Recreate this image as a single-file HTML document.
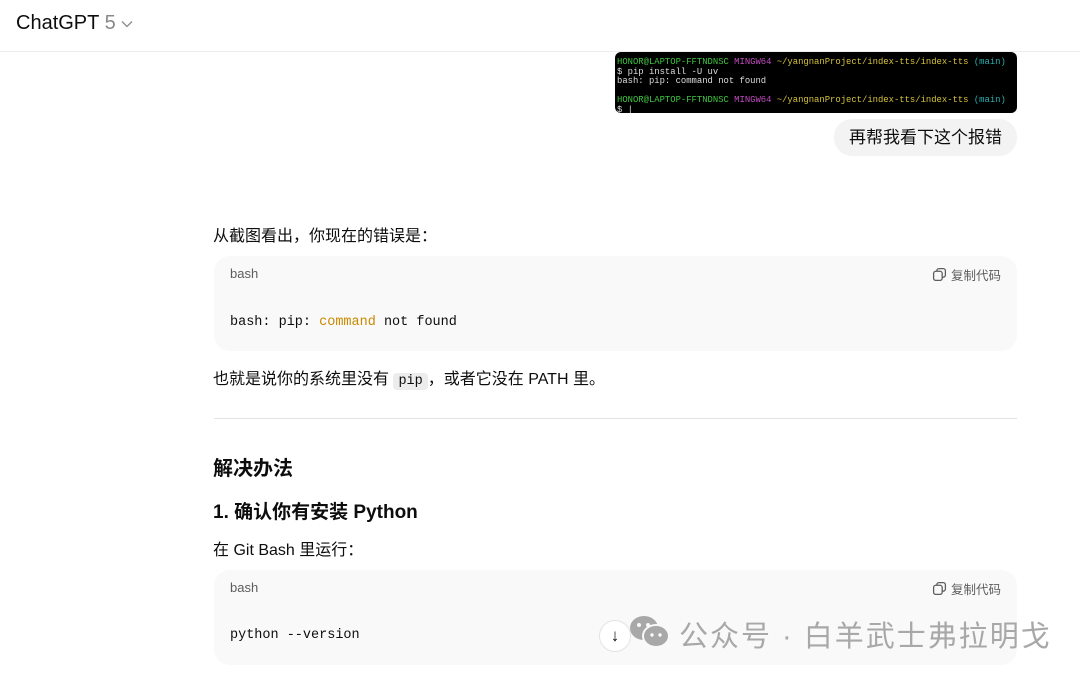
<!DOCTYPE html>
<html><head><meta charset="utf-8"><style>
*{margin:0;padding:0;box-sizing:border-box}
body{width:1080px;height:676px;overflow:hidden;background:#fff;font-family:"Liberation Sans","Noto Sans CJK SC",sans-serif;color:#0d0d0d;position:relative}
.abs{position:absolute}
.mono{font-family:"Liberation Mono","DejaVu Sans Mono",monospace}
.code{position:absolute;left:214px;width:803px;background:#f9f9f9;border-radius:16px}
.lang{position:absolute;left:16px;top:10px;font-size:13px;color:#5d5d5d}
.copy{position:absolute;right:16px;top:9px;font-size:12.5px;color:#5d5d5d;display:flex;align-items:center;gap:4px}
</style></head><body>
<div class="abs" style="left:16px;top:12px;font-size:20px">ChatGPT <span style="color:#888">5</span> <svg width="12" height="8" viewBox="0 0 12 8" style="vertical-align:middle"><path d="M1 1.5l5 5 5-5" fill="none" stroke="#888" stroke-width="1.3"/></svg></div>
<div class="abs" style="left:0;top:51px;width:1080px;height:1px;background:#ececec"></div>
<div class="abs mono" style="left:615px;top:52px;width:402px;height:61px;background:#000;border-radius:6px;font-size:8.9px;line-height:9.5px;padding:6px 2px;color:#ddd;white-space:pre;overflow:hidden"><span style="color:#3fc43f">HONOR@LAPTOP-FFTNDNSC</span> <span style="color:#c04cc0">MINGW64</span> <span style="color:#d5c23a">~/yangnanProject/index-tts/index-tts</span> <span style="color:#2bb0b0">(main)</span>
$ pip install -U uv
bash: pip: command not found

<span style="color:#3fc43f">HONOR@LAPTOP-FFTNDNSC</span> <span style="color:#c04cc0">MINGW64</span> <span style="color:#d5c23a">~/yangnanProject/index-tts/index-tts</span> <span style="color:#2bb0b0">(main)</span>
$ |</div>
<div class="abs" style="left:834px;top:119px;width:183px;height:37px;background:#f3f3f3;border-radius:18px;font-size:17px;line-height:37px;text-align:center">再帮我看下这个报错</div>
<div class="abs" style="left:213px;top:222px;font-size:16px">从截图看出，你现在的错误是：</div>
<div class="code" style="top:256px;height:95px"><div class="lang">bash</div><div class="copy"><svg width="15" height="15" viewBox="0 0 14 14"><rect x="1.5" y="4" width="8" height="8.5" rx="2" fill="none" stroke="#5d5d5d" stroke-width="1.2"/><path d="M4.5 4V3.5a2 2 0 012-2h4a2 2 0 012 2v4a2 2 0 01-2 2H9.5" fill="none" stroke="#5d5d5d" stroke-width="1.2"/></svg>复制代码</div>
<div class="abs mono" style="left:16px;top:59px;font-size:13.5px">bash: pip: <span style="color:#c98a00">command</span> not found</div></div>
<div class="abs" style="left:213px;top:365px;font-size:16px">也就是说你的系统里没有 <span class="mono" style="background:#ececec;border-radius:4px;padding:1px 5px;font-size:13.5px">pip</span>，或者它没在 PATH 里。</div>
<div class="abs" style="left:214px;top:418px;width:803px;height:1px;background:#e3e3e3"></div>
<div class="abs" style="left:213px;top:452px;font-size:20px;font-weight:bold">解决办法</div>
<div class="abs" style="left:213px;top:497px;font-size:19px;font-weight:bold">1. 确认你有安装 Python</div>
<div class="abs" style="left:213px;top:536px;font-size:16px">在 Git Bash 里运行：</div>
<div class="code" style="top:570px;height:95px"><div class="lang">bash</div><div class="copy"><svg width="15" height="15" viewBox="0 0 14 14"><rect x="1.5" y="4" width="8" height="8.5" rx="2" fill="none" stroke="#5d5d5d" stroke-width="1.2"/><path d="M4.5 4V3.5a2 2 0 012-2h4a2 2 0 012 2v4a2 2 0 01-2 2H9.5" fill="none" stroke="#5d5d5d" stroke-width="1.2"/></svg>复制代码</div>
<div class="abs mono" style="left:16px;top:58px;font-size:13.5px">python --version</div></div>
<div class="abs" style="left:599px;top:620px;width:32px;height:32px;border-radius:50%;background:#fff;border:1px solid #e3e3e3;text-align:center;line-height:30px;font-size:17px">↓</div>
<svg class="abs" style="left:628px;top:614px" width="44" height="36" viewBox="0 0 44 36"><ellipse cx="16" cy="14" rx="14" ry="12" fill="#a8a8a8"/><ellipse cx="28" cy="22" rx="13" ry="11" fill="#a8a8a8" stroke="#f9f9f9" stroke-width="2"/><circle cx="11" cy="11" r="2" fill="#f9f9f9"/><circle cx="20" cy="11" r="2" fill="#f9f9f9"/><circle cx="24" cy="21" r="1.7" fill="#f9f9f9"/><circle cx="32" cy="21" r="1.7" fill="#f9f9f9"/></svg>
<div class="abs" style="left:679px;top:613px;font-size:29px;color:#a8a8a8;letter-spacing:2px">公众号 · 白羊武士弗拉明戈</div>
</body></html>
